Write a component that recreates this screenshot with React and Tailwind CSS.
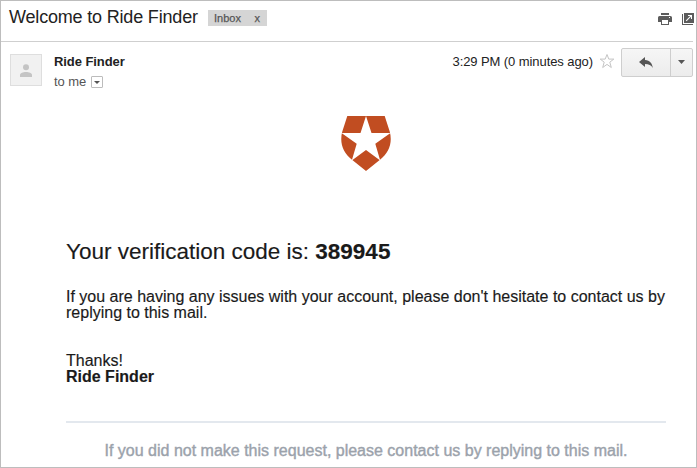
import React from "react";

function PrintIcon() {
  return (
    <svg className="block h-3 w-[14px]" viewBox="0 0 14 12" fill="#5c5c5c">
      <rect x="3" y="0" width="8" height="2" />
      <path fillRule="evenodd" d="M1.5 3h11q1.5 0 1.5 1.5V9h-3v3H3V9H0V4.5Q0 3 1.5 3zM4 7v4h6V7zM11 4v1h1V4z" />
    </svg>
  );
}

function PopOutIcon() {
  return (
    <svg className="block h-3 w-3" viewBox="0 0 12 12">
      <path d="M0 1h1v10h10v1H0z" fill="#5c5c5c" />
      <rect x="2" y="0" width="10" height="10" fill="#5c5c5c" />
      <path d="M6 2h4v4H9V3.800L4.600 8.200 3.800 7.400 8.200 3H6z" fill="#fff" />
    </svg>
  );
}

function ShieldLogo() {
  return (
    <svg className="block h-[55px] w-[50px]" viewBox="0 0 50 55">
      <path
        d="M6.300 0h37.400l5 15.500c3 11-.5 21.500-10 28.500L25 55 11.300 44C1.800 37-1.700 26.500 1.300 15.500z"
        fill="#c14d21"
      />
      <path
        d="M25 0l5.500 17H49.500L34.300 27.700 39.200 44.500 25 34 10.800 44.500 15.700 27.700.5 17h19z"
        fill="#fff"
      />
    </svg>
  );
}

function Header() {
  return (
    <header className="mr-[3px] flex h-[41px] border-b border-[#cfcfcf] pl-2">
      <h1 className="mt-[5px] w-[199px] whitespace-nowrap text-[18px] leading-[22px] tracking-[-0.18px] text-[#222]">
        Welcome to Ride Finder
      </h1>
      <div className="mt-[9px] flex h-4 w-[59px] justify-between bg-[#d5d5d5] pr-[7px] pl-[6px] text-[11px] leading-4 text-[#555] [-webkit-text-stroke:0.25px_#555]">
        <span>Inbox</span>
        <span>x</span>
      </div>
      <div className="mt-3 -mr-px ml-auto flex gap-[10px]">
        <PrintIcon />
        <PopOutIcon />
      </div>
    </header>
  );
}

function Sender() {
  return (
    <section className="mr-[3px] flex h-[74px] pt-[6px] pl-[9px]">
      <div className="mt-[6px] flex h-8 w-8 items-center justify-center border border-[#dedede] bg-[#f1f1f1]">
        <svg className="h-[13px] w-3" viewBox="0 0 12 13" fill="#c4c4c4">
          <circle cx="6" cy="3.200" r="3" />
          <path d="M0 13v-2c0-2 3-3 6-3s6 1 6 3v2z" />
        </svg>
      </div>
      <div className="ml-3 pt-[5px] text-[13px]">
        <div className="h-5 whitespace-nowrap leading-[17px] font-bold tracking-[-0.08px] text-[#222]">Ride Finder</div>
        <div className="flex h-[18px] items-center text-[#555]">
          <span className="tracking-[-0.1px]">to me</span>
          <span className="ml-[5px] flex h-3 w-3 items-center justify-center rounded-[1px] border border-[#bcbcbc]">
            <svg className="h-[3px] w-[6px]" viewBox="0 0 6 3" fill="#555"><path d="M0 0h6L3 3z" /></svg>
          </span>
        </div>
      </div>
      <div className="ml-auto flex">
        <span className="mt-[5px] text-[13px] leading-[17px] tracking-[-0.08px] whitespace-nowrap text-[#222]">3:29 PM (0 minutes ago)</span>
        <svg className="mt-[5px] ml-[6px] h-[16px] w-[16px]" viewBox="0 0 16 16" fill="none" stroke="#c4c4c4">
          <path d="M8 1.500l1.800 4.600h5l-4 3.100 1.500 5.300L8 11.400l-4.300 3.100 1.500-5.300-4-3.100h5z" />
        </svg>
        <div className="ml-[6px] flex h-[29px] w-[72px] rounded-[2px] border border-[#cecece] bg-linear-to-b from-[#f6f6f6] to-[#ececec]">
          <div className="flex w-[49px] items-center justify-center border-r border-[#cecece]">
            <svg className="h-[11px] w-[14px]" viewBox="0 0 14 11" fill="#555">
              <path d="M6 0v3c5 .5 7.300 3.500 7.800 8C12 8 10 7 6 7v3L0 5z" />
            </svg>
          </div>
          <div className="flex flex-1 items-center justify-center pb-px">
            <svg className="h-1 w-[7px]" viewBox="0 0 7 4" fill="#555"><path d="M0 0h7L3.500 4z" /></svg>
          </div>
        </div>
      </div>
    </section>
  );
}

export default function App() {
  return (
    <main className="h-[468px] w-[697px] overflow-hidden border border-[#bdbdbd] bg-white font-['Liberation_Sans',Arial,sans-serif] text-[#222]">
      <Header />
      <Sender />
      <article className="ml-[65px] w-[600px] text-[16px] leading-4 text-[#1a1a1a] [-webkit-text-stroke:0.15px_currentColor]">
        <div className="flex justify-center">
          <ShieldLogo />
        </div>
        <h2 className="mt-[68px] text-[22.5px] leading-[26px] whitespace-nowrap">
          Your verification code is: <strong>389945</strong>
        </h2>
        <p className="mt-6 whitespace-nowrap">
          If you are having any issues with your account, please don't hesitate to contact us by
          <br />
          replying to this mail.
        </p>
        <p className="mt-8">
          Thanks!
          <br />
          <strong>Ride Finder</strong>
        </p>
        <footer className="mt-9 border-t-2 border-[#e3e8ee] pt-5 text-center whitespace-nowrap text-[#9ba2ab] [-webkit-text-stroke:0.4px_currentColor]">
          If you did not make this request, please contact us by replying to this mail.
        </footer>
      </article>
    </main>
  );
}
